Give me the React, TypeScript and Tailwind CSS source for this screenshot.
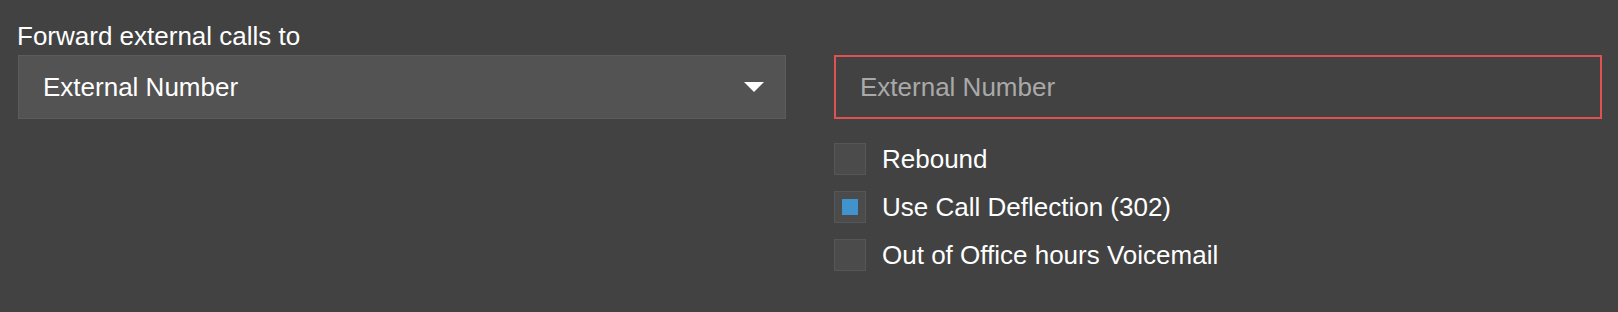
import React from 'react';

const options = [
  { label: 'Rebound', checked: false },
  { label: 'Use Call Deflection (302)', checked: true },
  { label: 'Out of Office hours Voicemail', checked: false },
];

const App: React.FC = () => {
  return (
    <div className="min-h-[312px] w-full bg-[#424242] text-[26px] text-white font-['Liberation_Sans',Arial,sans-serif]">
      <div className="pl-[17px] pt-[21px]">
        <div className="leading-[30px] mb-[4px]">Forward external calls to</div>
        <div className="ml-px flex items-start gap-[48px]">
          {/* Select */}
          <div className="flex h-[64px] w-[768px] items-center justify-between border border-[#5b5b5b] bg-[#535353] pl-[24px] pr-[21px]">
            <span className="leading-[30px]">External Number</span>
            <svg width="20" height="10" viewBox="0 0 20 10">
              <path d="M0 0 H20 L10 10 Z" fill="#ffffff" />
            </svg>
          </div>

          {/* Input + options */}
          <div className="flex flex-col">
            <div className="flex h-[64px] w-[768px] items-center border-2 border-[#e05252] pl-[24px]">
              <span className="leading-[30px] text-[#a9a9a9]">External Number</span>
            </div>
            <div className="mt-[24px] flex flex-col gap-[16px]">
              {options.map((o) => (
                <div key={o.label} className="flex items-center gap-[16px]">
                  <div className="flex h-[32px] w-[32px] items-center justify-center border border-[#565656] bg-[#4b4b4b]">
                    {o.checked && <div className="h-[16px] w-[16px] bg-[#4193cd]" />}
                  </div>
                  <span className="leading-[32px]">{o.label}</span>
                </div>
              ))}
            </div>
          </div>
        </div>
      </div>
    </div>
  );
};

export default App;
